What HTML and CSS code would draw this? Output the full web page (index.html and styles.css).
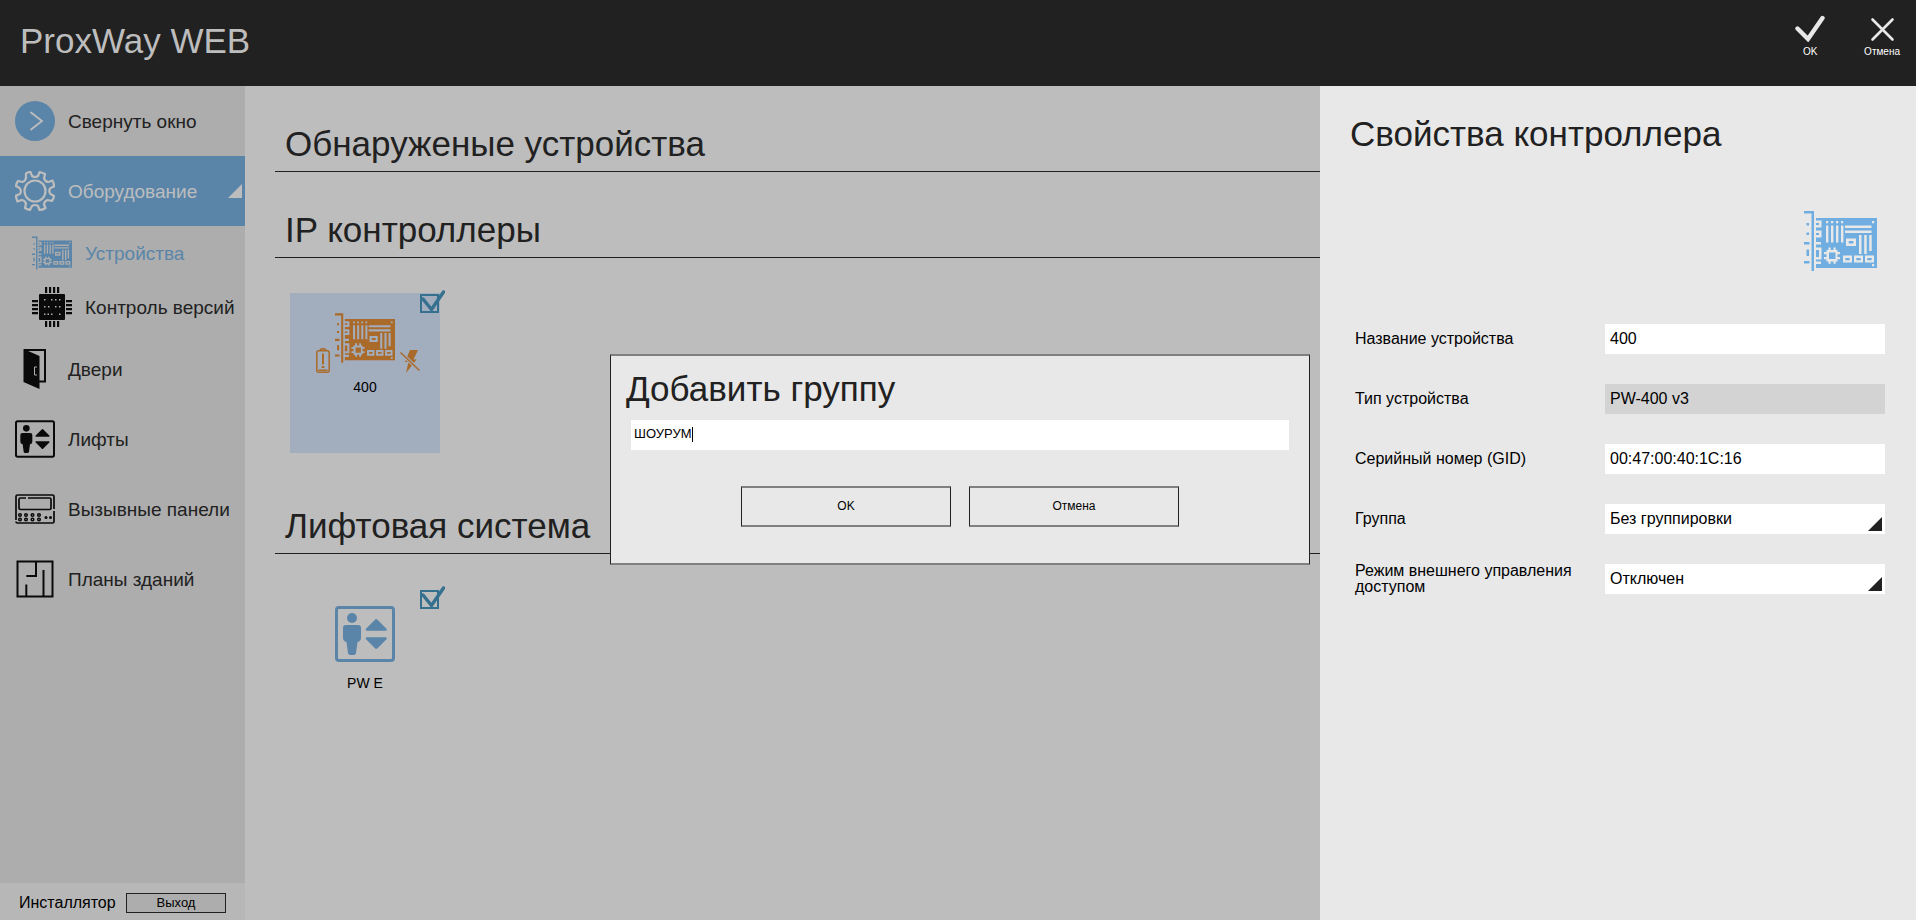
FILE: index.html
```html
<!DOCTYPE html>
<html lang="ru">
<head>
<meta charset="utf-8">
<title>ProxWay WEB</title>
<link rel="stylesheet" href="styles.css">
</head>
<body>
<svg class="sprite" aria-hidden="true">
  <symbol id="board" viewBox="24 21 73 60">
    <path fill="currentColor" fill-rule="evenodd" d="M24 21h10v60h-2.500v-57.500h-7.500z
      M26.500 33h2.500v2.500h-2.500z M26.500 42.500h2.500v2.500h-2.500z M24 52h5.500v2.500h-5.500z M26.500 59.500h2.500v6.500h-2.500z M24 71h5.500v2.500h-5.500z
      M36 28h61v50h-61z
      M36 30.500h5.500v7h-5.500z M36 33h3v2h-3z M36 40.500h5.500v7h-5.500z M36 43h3v2h-3z M36 52h5v2.500h-5z M36 57.500h5.500v12h-5.500z M36 60h3v7h-3z M36 71.500h5v2.500h-5z
      M46 31h2.200v2.200h-2.200z M51 31h2.200v2.200h-2.200z M56 31h2.200v2.200h-2.200z M61 31h2.200v2.200h-2.200z M92 31h2.200v2.200h-2.200z M92 74h2.200v2.200h-2.200z
      M46 35.500h2.400v17h-2.400z M51 35.500h2.400v17h-2.400z M56 35.500h2.400v17h-2.400z M61 35.500h2.400v17h-2.400z
      M65 35.500h26.500v2.500h-26.500z M65 40.500h26.500v2.500h-26.500z
      M66 48.500h10v7.500h-10z M68.800 51h4.600v2.500h-4.600z
      M79 45h2.500v19h-2.500z M84.200 45h2.500v19h-2.500z M89.200 45h2.500v16h-2.500z
      M46.500 60h11v11.500h-11z M49 62.500h6.500v6.500h-6.500z
      M48.500 57.500h2.200v2.500h-2.200z M53.500 57.500h2.200v2.500h-2.200z M48.500 71.500h2.200v2.300h-2.200z M53.500 71.500h2.200v2.300h-2.200z M44 62h2.500v2.200h-2.500z M44 67h2.500v2.200h-2.500z M57.500 62h2.500v2.200h-2.500z M57.500 67h2.500v2.200h-2.500z
      M63 65.500h9v7h-9z M65.300 68h4.400v2.200h-4.400z M74 65.500h9v7h-9z M76.300 68h4.400v2.200h-4.400z M85 65.500h9v7h-9z M87.300 68h4.400v2.200h-4.400z"/>
  </symbol>
  <symbol id="lift" viewBox="0 0 60 56">
    <rect x="1.500" y="1.500" width="57" height="53" rx="2.500" fill="none" stroke="currentColor" stroke-width="3"/>
    <circle cx="17" cy="12" r="5" fill="currentColor"/>
    <path fill="currentColor" d="M11 19h12q3 0 3 3v10q0 3-3.500 4l-1.500 11q-.5 2-2 2h-4q-1.500 0-2-2l-1.500-11q-3.500-1-3.500-4v-10q0-3 3-3z
      M41 13q.8 0 1.500.8l9 9q1 1.700-.5 2h-19.500q-1.500-.3-.5-2l9-9q.3-.8 1-.8z
      M41 43q.8 0 1.500-.8l9-9q1-1.700-.5-2h-19.500q-1.500.3-.5 2l9 9q.3.8 1 .8z"/>
  </symbol>
  <symbol id="tick" viewBox="0 0 25 23">
    <path d="M3 9l8.500 10.500L23.500 2" fill="none" stroke="currentColor" stroke-width="3.400" stroke-linecap="round"/>
  </symbol>
</svg>

<header class="topbar">
  <h1 class="title">ProxWay WEB</h1>
  <div class="topbar-actions">
    <button class="top-button" type="button">
      <svg width="32" height="28" viewBox="0 0 32 28"><path d="M3.500 14.500l10.500 10.500L28.500 4" fill="none" stroke="#e8e8e8" stroke-width="4.400" stroke-linecap="round"/></svg>
      OK
    </button>
    <button class="top-button" type="button">
      <svg width="32" height="28" viewBox="0 0 32 28"><path d="M6.500 5.500l20 20M26.500 5.500l-20 20" fill="none" stroke="#e8e8e8" stroke-width="2.600" stroke-linecap="round"/></svg>
      Отмена
    </button>
  </div>
</header>

<div class="layout">
  <nav class="sidebar">
    <a class="item" href="#">
      <svg class="item-icon" viewBox="0 0 40 40"><circle cx="20" cy="20" r="20" fill="#5a85a9"/><path d="M16 11.500l11 8.500-11 8.500" fill="none" stroke="#bdbdbd" stroke-width="1.800" stroke-linecap="round"/></svg>
      <span>Свернуть окно</span>
    </a>
    <a class="item active" href="#">
      <svg class="item-icon" viewBox="0 0 40 40"><g fill="none" stroke="currentColor" stroke-width="2.200" stroke-linejoin="round"><circle cx="20" cy="20" r="10.500"/>
        <path d="M11 2.500Q13.500 1 15.500 1L17 5Q20 7 23 5L24.500 1.200Q27 1.500 30 3L29 7.500Q30.500 11 33.500 11L37.500 9.500Q39 12 39 15.500L35.500 17Q33 20 35.500 23L39 25Q38.500 28 37 30L32.500 29Q29 30.500 29 33.500L30.500 37Q27.500 39 24.500 39L23 35Q20 33 17 35L15 39Q12 38.500 10 37L11 32.500Q9.500 29 6.500 29L2.500 30.500Q1 27.500 1 24.500L5 23Q7 20 4.500 17L1 15Q1.500 12 3 10L7.500 11Q11 9.500 11 6.500Z"/></g></svg>
      <span>Оборудование</span>
      <svg class="corner" width="14" height="14" viewBox="0 0 14 14"><path d="M14 0v14H0z" fill="currentColor"/></svg>
    </a>
    <a class="item sub current" href="#">
      <svg class="item-icon"><use href="#board"/></svg>
      <span>Устройства</span>
    </a>
    <a class="item sub" href="#">
      <svg class="item-icon" viewBox="0 0 40 40"><g fill="#0a0a0a"><rect x="7" y="7" width="26" height="26" rx="1"/>
        <path d="M13 0h2.200v6h-2.200zM17 0h2.200v6h-2.200zM21 0h2.200v6h-2.200zM25 0h2.200v6h-2.200zM13 34h2.200v6h-2.200zM17 34h2.200v6h-2.200zM21 34h2.200v6h-2.200zM25 34h2.200v6h-2.200zM0 13h6v2.200h-6zM0 17h6v2.200h-6zM0 21h6v2.200h-6zM0 25h6v2.200h-6zM34 13h6v2.200h-6zM34 17h6v2.200h-6zM34 21h6v2.200h-6zM34 25h6v2.200h-6z"/></g>
        <path fill="#adadad" d="M12 12h1.500v1.500h-1.500zM19 12h1.500v1.500h-1.500zM23 12h1.500v1.500h-1.500zM27 12h1.500v1.500h-1.500zM12 19h1.500v1.500h-1.500zM16 19h1.500v1.500h-1.500zM23 19h1.500v1.500h-1.500zM27 19h1.500v1.500h-1.500zM12 26.500h1.500v1.500h-1.500zM15.500 26.500h1.500v1.500h-1.500zM19 26.500h1.500v1.500h-1.500zM27 26.500h1.500v1.500h-1.500z"/></svg>
      <span>Контроль версий</span>
    </a>
    <a class="item" href="#">
      <svg class="item-icon" viewBox="0 0 40 40"><path d="M9 1h21v31.500h-6" fill="none" stroke="#0a0a0a" stroke-width="2"/><path d="M8.500 0l16 7v33l-16-7z" fill="#0a0a0a"/><path d="M22 18h-2.500v8H22" fill="none" stroke="#adadad"/></svg>
      <span>Двери</span>
    </a>
    <a class="item" href="#">
      <svg class="item-icon dark"><use href="#lift"/></svg>
      <span>Лифты</span>
    </a>
    <a class="item" href="#">
      <svg class="item-icon" viewBox="0 0 40 40"><g fill="none" stroke="#0a0a0a" stroke-width="1.700"><path d="M1 31V7.500q0-1.500 1.500-1.500h35q1.500 0 1.500 1.500V20M39 22v10.500q0 1.500-1.500 1.500h-35q-1.500 0-1.500-1.500"/><path d="M11 9H5.500Q4 9 4 10.500v8.500q0 1.500 1.500 1.500h29q1.500 0 1.500-1.500v-8.500q0-1.500-1.500-1.500H13" /></g>
        <g fill="#adadad" stroke="#0a0a0a" stroke-width="1.500"><circle cx="5" cy="26" r="1.300"/><circle cx="11" cy="26" r="1.300"/><circle cx="17.500" cy="26" r="1.300"/><circle cx="24" cy="26" r="1.300"/><circle cx="5" cy="30.500" r="1.300"/><circle cx="11" cy="30.500" r="1.300"/><circle cx="17.500" cy="30.500" r="1.300"/><circle cx="24" cy="30.500" r="1.300"/></g><circle cx="31" cy="28.500" r="1.500" fill="#0a0a0a"/><circle cx="35.500" cy="28.500" r="1.500" fill="#0a0a0a"/></svg>
      <span>Вызывные панели</span>
    </a>
    <a class="item" href="#">
      <svg class="item-icon" viewBox="0 0 40 40"><path d="M2.500 2.500h35v35h-35zM21 2.500v14.500h-9.700M11.300 38V25.500M28.500 38V11" fill="none" stroke="#0a0a0a" stroke-width="2"/></svg>
      <span>Планы зданий</span>
    </a>
    <div class="account">
      <span>Инсталлятор</span>
      <button class="logout" type="button">Выход</button>
    </div>
  </nav>

  <main class="content">
    <section>
      <h2 class="heading ruled">Обнаруженые устройства</h2>
    </section>
    <section>
      <h2 class="heading ruled">IP контроллеры</h2>
      <div class="tiles">
        <article class="tile selected">
          <label class="pick"><input type="checkbox" checked aria-label="400"><svg><use href="#tick"/></svg></label>
          <div class="device">
            <svg class="battery" viewBox="0 0 14 25"><g fill="none" stroke="currentColor" stroke-width="1.500"><rect x=".8" y="2.800" width="12.400" height="21.400" rx="2"/><path d="M4 2.500q0-1.800 3-1.800t3 1.800"/></g><path fill="currentColor" d="M6 5.500h2v11h-2zM5.700 18h2.600v2h-2.600zM2.500 21.500h9v1.500h-9z"/></svg>
            <svg class="device-icon"><use href="#board"/></svg>
            <svg class="bolt" viewBox="0 0 20 24"><path d="M10 1h8l-4.500 9.500h3L6 24l2.500-11H5z" fill="currentColor"/><path d="M.5 3.500l19 18" stroke="#a2adbe" stroke-width="3.500"/><path d="M.5 3.500l19 18" stroke="currentColor" stroke-width="1.500"/></svg>
          </div>
          <p class="tile-name">400</p>
        </article>
      </div>
    </section>
    <section>
      <h2 class="heading ruled">Лифтовая система</h2>
      <div class="tiles">
        <article class="tile">
          <label class="pick"><input type="checkbox" checked aria-label="PW E"><svg><use href="#tick"/></svg></label>
          <div class="device lift">
            <svg class="device-icon"><use href="#lift"/></svg>
          </div>
          <p class="tile-name">PW E</p>
        </article>
      </div>
    </section>
  </main>

  <aside class="properties">
    <h2 class="heading">Свойства контроллера</h2>
    <svg class="type-icon"><use href="#board"/></svg>
    <form class="fields">
      <label for="name">Название устройства</label>
      <input class="field" id="name" value="400">
      <label for="type">Тип устройства</label>
      <input class="field" id="type" value="PW-400 v3" readonly>
      <label for="serial">Серийный номер (GID)</label>
      <input class="field" id="serial" value="00:47:00:40:1C:16">
      <label for="group">Группа</label>
      <select class="field" id="group"><option>Без группировки</option></select>
      <label for="mode">Режим внешнего управления доступом</label>
      <select class="field" id="mode"><option>Отключен</option></select>
    </form>
  </aside>
</div>

<div class="overlay">
  <form class="dialog" role="dialog" aria-labelledby="dialog-title">
    <h2 class="heading" id="dialog-title">Добавить группу</h2>
    <div class="dialog-field">
      <input class="dialog-input" aria-labelledby="dialog-title" value="ШОУРУМ">
      <span class="caret"></span>
    </div>
    <div class="dialog-actions">
      <button type="button">OK</button>
      <button type="button">Отмена</button>
    </div>
  </form>
</div>
</body>
</html>
```

FILE: styles.css
```css
* { box-sizing: border-box; }

body {
  display: flex;
  flex-direction: column;
  min-height: 100vh;
  margin: 0;
  background: #bdbdbd;
  color: #212121;
  font-family: "Liberation Sans", Arial, sans-serif;
  font-size: 16px;
}

button, input, select {
  margin: 0;
  border: 0;
  border-radius: 0;
  outline: 0;
  font-family: inherit;
  color: #000;
}

.sprite { position: absolute; width: 0; height: 0; }

.topbar {
  display: flex;
  justify-content: space-between;
  padding: 14px 16px 0 20px;
  height: 86px;
  background: #212121;
}

.title {
  margin: 7px 0 0;
  color: #bdbdbd;
  font-size: 35px;
  font-weight: 400;
  line-height: 40px;
}

.topbar-actions { display: flex; align-items: flex-start; gap: 38px; }

.top-button {
  display: flex;
  flex-direction: column;
  align-items: center;
  gap: 4px;
  padding: 0;
  background: none;
  color: #fff;
  font-size: 10px;
  line-height: 12px;
}

.layout { display: flex; flex: 1; }

.sidebar {
  display: flex;
  flex-direction: column;
  flex: none;
  width: 245px;
  background: #adadad;
}

.item {
  display: flex;
  align-items: center;
  gap: 13px;
  min-height: 70px;
  padding: 0 3px 0 15px;
  color: #212121;
  font-size: 19px;
  text-decoration: none;
  white-space: nowrap;
}

.item span { padding-top: 2px; }
.item-icon { flex: none; width: 40px; height: 40px; }
.dark { color: #0a0a0a; }
.active { background: #5a85a9; color: #bdbdbd; }
.corner { margin-left: auto; }
.sub { min-height: 54px; padding-left: 32px; }
.current { color: #5a85a9; }

.account {
  display: flex;
  align-items: center;
  justify-content: space-between;
  height: 37px;
  margin-top: auto;
  padding: 2px 19px 0;
  background: #b7b7b7;
  color: #000;
}

.logout {
  width: 100px;
  height: 20px;
  padding: 0;
  border: 1px solid #212121;
  background: #adadad;
  font-size: 13px;
}

.content { flex: 1; padding: 38px 0 0 30px; }
.content section + section { margin-top: 38px; }

.heading {
  margin: 0;
  font-size: 35px;
  font-weight: 400;
  line-height: 40px;
}

.ruled { padding: 0 0 7px 10px; border-bottom: 1px solid #212121; }

.tiles { display: flex; gap: 15px; padding: 35px 15px 15px; }

.tile { position: relative; width: 150px; height: 160px; padding-top: 15px; color: #000; }
.selected { background: #a2adbe; }

.pick { position: absolute; top: 1px; right: 1px; width: 19px; height: 19px; color: #35708f; }
.pick input { display: block; width: 19px; height: 19px; appearance: none; border: 2px solid currentColor; color: #35708f; }
.pick svg { position: absolute; top: -4px; left: 0; width: 25px; height: 23px; }

.device {
  display: grid;
  grid-template-columns: 1fr 60px 1fr;
  column-gap: 5px;
  height: 65px;
  color: #aa6a2a;
}

.device-icon { grid-column: 2; width: 60px; height: 60px; }
.battery { align-self: end; justify-self: end; width: 14px; height: 25px; }
.bolt { align-self: end; width: 20px; height: 24px; }
.lift { color: #5a85a9; }

.tile-name { margin: 6px 0 0; font-size: 14px; line-height: 16px; text-align: center; }

.properties {
  display: flex;
  flex-direction: column;
  flex: none;
  width: 596px;
  padding: 28px 31px 28px 30px;
  background: #e8e8e8;
}

.type-icon {
  align-self: flex-end;
  width: 73px;
  height: 60px;
  margin: 57px 8px 53px 0;
  color: #70aee2;
}

.fields {
  display: grid;
  grid-template-columns: 220px 1fr;
  align-items: center;
  gap: 30px;
  padding-left: 5px;
  color: #000;
  line-height: 16px;
}

.fields label { margin: -1px 0; }

.field {
  width: 100%;
  height: 30px;
  padding: 0 5px;
  background: #fff;
  font-size: 16px;
}

.field[readonly] { background: #d3d3d3; }

select.field {
  appearance: none;
  padding-bottom: 2px;
  background: #fff url("data:image/svg+xml,%3Csvg xmlns='http://www.w3.org/2000/svg' viewBox='0 0 14 14'%3E%3Cpath d='M14 0v14H0z' fill='%23212121'/%3E%3C/svg%3E") no-repeat right 3px bottom 3px / 14px 14px;
}

.overlay {
  position: fixed;
  inset: 0;
  display: grid;
  place-items: center;
  padding: 0 0 2px 4px;
}

.dialog {
  width: 700px;
  padding: 13px 15px 36px;
  border: solid #212121;
  border-width: 2px 1px;
  border-top-color: #808080;
  border-bottom-color: #808080;
  background: #e8e8e8;
}

.dialog-field { position: relative; margin: 11px 5px 36px; }

.dialog-input {
  display: block;
  width: 100%;
  height: 30px;
  padding: 0 3px 2px;
  background: #fff;
  font-size: 13px;
}

.caret { position: absolute; top: 7px; left: 61px; width: 1px; height: 15px; background: #000; }

.dialog-actions { display: flex; justify-content: center; gap: 18px; }

.dialog-actions button {
  width: 210px;
  height: 41px;
  padding: 0;
  border: solid #212121;
  border-width: 2px 1px;
  border-top-color: #808080;
  border-bottom-color: #808080;
  background: none;
  font-size: 12px;
}
```
